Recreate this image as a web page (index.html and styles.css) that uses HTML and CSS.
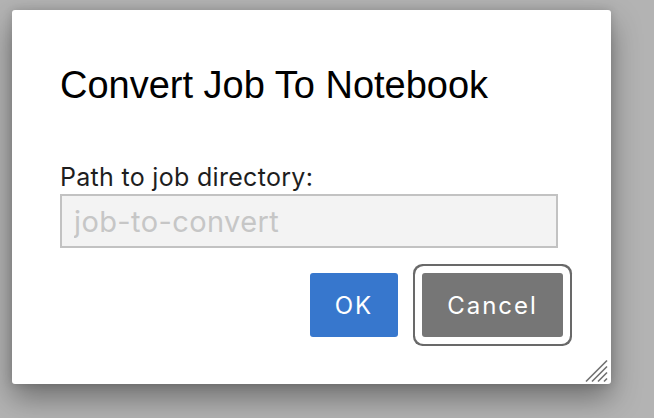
FILE: index.html
```html
<!DOCTYPE html>
<html>
<head>
<meta charset="utf-8">
<link rel="stylesheet" href="styles.css">
</head>
<body>
<div class="dialog">
  <h1 class="title">Convert Job To Notebook</h1>
  <label class="label" for="path">Path to job directory:</label>
  <input id="path" class="field" type="text" placeholder="job-to-convert">
  <div class="actions">
    <button class="btn btn-ok">OK</button>
    <button class="btn btn-cancel">Cancel</button>
  </div>
  <svg class="grip" width="24" height="24" viewBox="0 0 24 24">
    <g stroke="#6f6f6f" stroke-width="1.6" stroke-linecap="butt">
      <line x1="1" y1="22.5" x2="22" y2="1.5"/>
      <line x1="7" y1="22.5" x2="22" y2="7.5"/>
      <line x1="13" y1="22.5" x2="22" y2="13.5"/>
      <line x1="19" y1="22.5" x2="22" y2="19.5"/>
    </g>
  </svg>
</div>
</body>
</html>
```
FILE: styles.css
```css
html, body {
  margin: 0;
  padding: 0;
}
body {
  width: 654px;
  height: 418px;
  background: #b3b3b3;
  overflow: hidden;
  padding: 10px 0 0 12px;
  box-sizing: border-box;
}
.dialog {
  position: relative;
  width: 599px;
  height: 374px;
  box-sizing: border-box;
  background: #ffffff;
  border-radius: 3px;
  box-shadow: 0 14px 30px rgba(0, 0, 0, 0.38), 0 0 10px rgba(0, 0, 0, 0.15);
  padding: 54px 48px 47px 48px;
  display: flex;
  flex-direction: column;
}
.title {
  margin: 0;
  font-family: "Liberation Sans", Arial, sans-serif;
  font-weight: 400;
  font-size: 38px;
  line-height: 42px;
  color: #000;
}
.label {
  margin-top: 58px;
  font-family: Inter, "Noto Sans", sans-serif;
  font-size: 25px;
  line-height: 27px;
  letter-spacing: 0.3px;
  color: #1e1e1e;
}
.field {
  margin: 3px 0 0 0;
  width: 498px;
  height: 54px;
  box-sizing: border-box;
  border: 2px solid #c2c2c2;
  background: #f3f3f3;
  padding: 0 0 0 12px;
  font-family: Inter, "Noto Sans", sans-serif;
  font-size: 29px;
  letter-spacing: 0.4px;
  color: #333;
  outline: none;
}
.field::placeholder {
  color: #c6c6c6;
}
.actions {
  margin-top: 25px;
  display: flex;
  justify-content: flex-end;
  gap: 24px;
}
.btn {
  height: 64px;
  border: none;
  border-radius: 3px;
  color: #fff;
  font-family: Inter, "Noto Sans", sans-serif;
  font-size: 24px;
  letter-spacing: 2px;
  padding: 0;
}
.btn-ok {
  width: 88px;
  background: #3777cd;
}
.btn-cancel {
  width: 141px;
  background: #767676;
  box-shadow: 0 0 0 7px #ffffff, 0 0 0 9px #696969;
}
.grip {
  position: absolute;
  right: 2px;
  bottom: 1px;
}
```
